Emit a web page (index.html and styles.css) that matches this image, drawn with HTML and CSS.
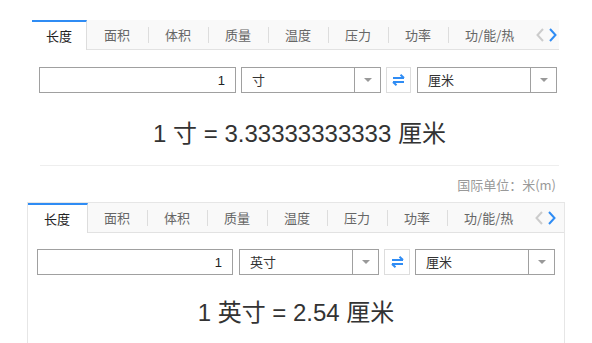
FILE: index.html
```html
<!DOCTYPE html>
<html lang="zh-CN">
<head>
    <meta charset="UTF-8">
    <meta name="viewport" content="width=device-width, initial-scale=1.0">
    <title>单位换算</title>
    <link rel="stylesheet" href="styles.css">
</head>
<body>
    <div class="converter converter-top">
        <div class="tabs">
            <ul class="tab-list">
                <li class="tab active">长度</li>
                <li class="tab">面积</li>
                <li class="tab">体积</li>
                <li class="tab">质量</li>
                <li class="tab">温度</li>
                <li class="tab">压力</li>
                <li class="tab">功率</li>
                <li class="tab">功/能/热</li>
            </ul>
            <div class="tab-arrows">
                <svg class="arrow arrow-prev" width="8" height="14" viewBox="0 0 8 14"><polyline points="7,1 1.5,7 7,13" fill="none" stroke="currentColor" stroke-width="2"/></svg>
                <svg class="arrow arrow-next" width="8" height="14" viewBox="0 0 8 14"><polyline points="1,1 6.5,7 1,13" fill="none" stroke="currentColor" stroke-width="2"/></svg>
            </div>
        </div>
        <div class="form">
            <input class="amount" type="text" value="1">
            <div class="select">
                <span class="select-text">寸</span>
                <span class="select-btn"><i class="caret"></i></span>
            </div>
            <button class="swap" type="button">
                <svg width="13" height="12" viewBox="0 0 13 12"><path d="M1 4H12M12 4L8.5 0.8M12 8H1M1 8L4.5 11.2" fill="none" stroke="currentColor" stroke-width="2"/></svg>
            </button>
            <div class="select">
                <span class="select-text">厘米</span>
                <span class="select-btn"><i class="caret"></i></span>
            </div>
        </div>
        <div class="result">1 寸 = 3.33333333333 厘米</div>
        <div class="si-unit">国际单位：米(m)</div>
    </div>

    <div class="converter converter-bottom">
        <div class="tabs">
            <ul class="tab-list">
                <li class="tab active">长度</li>
                <li class="tab">面积</li>
                <li class="tab">体积</li>
                <li class="tab">质量</li>
                <li class="tab">温度</li>
                <li class="tab">压力</li>
                <li class="tab">功率</li>
                <li class="tab">功/能/热</li>
            </ul>
            <div class="tab-arrows">
                <svg class="arrow arrow-prev" width="8" height="14" viewBox="0 0 8 14"><polyline points="7,1 1.5,7 7,13" fill="none" stroke="currentColor" stroke-width="2"/></svg>
                <svg class="arrow arrow-next" width="8" height="14" viewBox="0 0 8 14"><polyline points="1,1 6.5,7 1,13" fill="none" stroke="currentColor" stroke-width="2"/></svg>
            </div>
        </div>
        <div class="form">
            <input class="amount" type="text" value="1">
            <div class="select">
                <span class="select-text">英寸</span>
                <span class="select-btn"><i class="caret"></i></span>
            </div>
            <button class="swap" type="button">
                <svg width="13" height="12" viewBox="0 0 13 12"><path d="M1 4H12M12 4L8.5 0.8M12 8H1M1 8L4.5 11.2" fill="none" stroke="currentColor" stroke-width="2"/></svg>
            </button>
            <div class="select">
                <span class="select-text">厘米</span>
                <span class="select-btn"><i class="caret"></i></span>
            </div>
        </div>
        <div class="result">1 英寸 = 2.54 厘米</div>
    </div>
</body>
</html>
```

FILE: styles.css
```css
body {
    margin: 0;
    font-family: "Liberation Sans", "Noto Sans CJK SC", sans-serif;
    color: #333;
    overflow: hidden;
}
.converter {
    box-sizing: border-box;
}
.converter-top {
    width: 527px;
    margin: 20px 0 0 32px;
}
.converter-bottom {
    width: 538px;
    height: 150px;
    margin: 7px 0 0 27px;
    border: 1px solid #e6e6e6;
    border-bottom: none;
}

/* tabs */
.tabs {
    position: relative;
    height: 29px;
    background: #f9f9f9;
    border-bottom: 1px solid #e2e2e2;
}
.tab-list {
    display: flex;
    margin: 0;
    padding: 0;
    list-style: none;
    height: 30px;
    overflow: hidden;
}
.tab {
    position: relative;
    flex: none;
    padding: 0 17px;
    height: 29px;
    line-height: 29px;
    font-size: 13px;
    font-family: "Noto Sans CJK SC", sans-serif;
    color: #666;
    white-space: nowrap;
}
.tab::before {
    content: "";
    position: absolute;
    left: 0;
    top: 7px;
    height: 16px;
    border-left: 1px solid #ddd;
}
.tab.active {
    height: 28px;
    line-height: 27px;
    padding: 0 17px;
    background: #fff;
    color: #222;
    border-top: 2px solid #2f8cf4;
    border-right: 1px solid #ddd;
}
.tab.active::before,
.tab.active + .tab::before {
    display: none;
}
.tab.active + .tab {
    padding-left: 16px;
}
.converter-top .tab.active {
    padding: 0 14px;
}
.converter-top .tab.active + .tab {
    padding: 0 18px 0 17px;
}
.converter-bottom .tab.active {
    margin-left: -1px;
}
.tab-arrows {
    position: absolute;
    right: 0;
    top: 0;
    height: 29px;
    display: flex;
    align-items: center;
    gap: 5px;
    padding: 0 2px 0 12px;
    background: #f9f9f9;
}
.converter-bottom .tab-arrows {
    padding-right: 8px;
}
.arrow-prev {
    color: #ccc;
}
.arrow-next {
    color: #2f8cf4;
}

/* form row */
.form {
    display: flex;
    height: 26px;
    margin: 17px 0 0 7px;
}
.converter-bottom .form {
    margin: 16px 0 0 9px;
}
.amount {
    box-sizing: border-box;
    width: 197px;
    height: 26px;
    margin: 0;
    padding: 0 10px;
    border: 1px solid #a0a0a0;
    border-radius: 0;
    outline: none;
    text-align: right;
    font: 13px "Liberation Sans", sans-serif;
    color: #222;
}
.converter-bottom .amount {
    width: 196px;
}
.select {
    box-sizing: border-box;
    display: flex;
    width: 140px;
    height: 26px;
    margin-left: 5px;
    border: 1px solid #a0a0a0;
    background: #fff;
}
.converter-bottom .select {
    margin-left: 6px;
}
.select-text {
    flex: 1;
    padding-left: 10px;
    line-height: 24px;
    font-size: 13px;
    font-family: "Noto Sans CJK SC", sans-serif;
    color: #333;
}
.select-btn {
    width: 25px;
    border-left: 1px solid #a0a0a0;
    display: flex;
    align-items: center;
    justify-content: center;
}
.caret {
    width: 0;
    height: 0;
    border-left: 4px solid transparent;
    border-right: 4px solid transparent;
    border-top: 4px solid #999;
}
.swap {
    box-sizing: border-box;
    width: 25px;
    height: 26px;
    margin: 0 0 0 5px;
    padding: 0;
    border: 1px solid #ddd;
    background: #fff;
    color: #2f8cf4;
    display: flex;
    align-items: center;
    justify-content: center;
}
.converter-bottom .swap {
    width: 26px;
}
.swap + .select {
    margin-left: 6px;
}
.converter-bottom .swap + .select {
    margin-left: 5px;
}

/* result */
.result {
    margin-top: 23px;
    padding-bottom: 13px;
    line-height: 36px;
    font-size: 24px;
    text-align: center;
    color: #333;
    border-bottom: 1px solid #eee;
    margin-left: 8px;
}
.converter-bottom .result {
    margin: 20px 0 0;
    border-bottom: none;
}
.si-unit {
    margin-top: 9px;
    padding-right: 3px;
    line-height: 20px;
    font-size: 13px;
    font-family: "Noto Sans CJK SC", sans-serif;
    text-align: right;
    color: #999;
}
```
